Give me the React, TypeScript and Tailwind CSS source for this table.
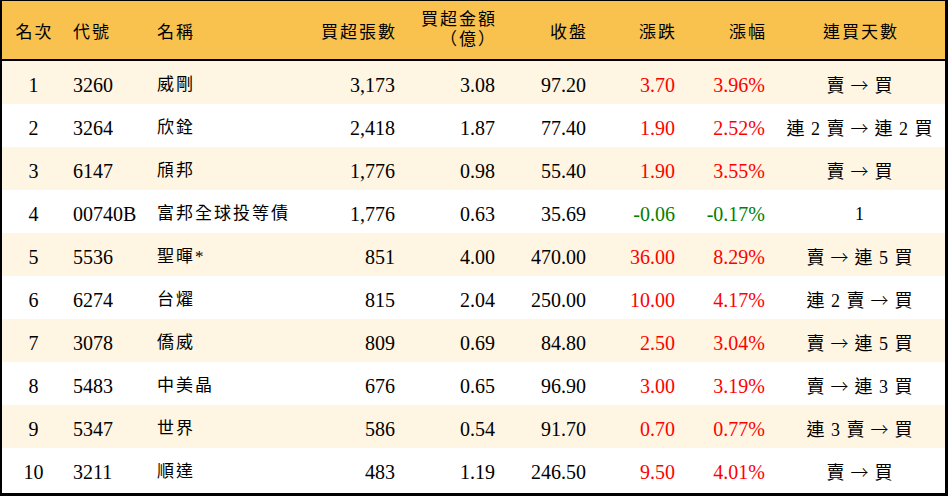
import React from "react";

// --- Data ---
type Row = {
  rank: number;
  code: string;
  name: string;
  lots: string;
  amount: string;
  close: string;
  change: string;
  pct: string;
  streak: string;
};

const rows: Row[] = [
  { rank: 1, code: "3260", name: "威剛", lots: "3,173", amount: "3.08", close: "97.20", change: "3.70", pct: "3.96%", streak: "賣 → 買" },
  { rank: 2, code: "3264", name: "欣銓", lots: "2,418", amount: "1.87", close: "77.40", change: "1.90", pct: "2.52%", streak: "連 2 賣 → 連 2 買" },
  { rank: 3, code: "6147", name: "頎邦", lots: "1,776", amount: "0.98", close: "55.40", change: "1.90", pct: "3.55%", streak: "賣 → 買" },
  { rank: 4, code: "00740B", name: "富邦全球投等債", lots: "1,776", amount: "0.63", close: "35.69", change: "-0.06", pct: "-0.17%", streak: "1" },
  { rank: 5, code: "5536", name: "聖暉*", lots: "851", amount: "4.00", close: "470.00", change: "36.00", pct: "8.29%", streak: "賣 → 連 5 買" },
  { rank: 6, code: "6274", name: "台燿", lots: "815", amount: "2.04", close: "250.00", change: "10.00", pct: "4.17%", streak: "連 2 賣 → 買" },
  { rank: 7, code: "3078", name: "僑威", lots: "809", amount: "0.69", close: "84.80", change: "2.50", pct: "3.04%", streak: "賣 → 連 5 買" },
  { rank: 8, code: "5483", name: "中美晶", lots: "676", amount: "0.65", close: "96.90", change: "3.00", pct: "3.19%", streak: "賣 → 連 3 買" },
  { rank: 9, code: "5347", name: "世界", lots: "586", amount: "0.54", close: "91.70", change: "0.70", pct: "0.77%", streak: "連 3 賣 → 買" },
  { rank: 10, code: "3211", name: "順達", lots: "483", amount: "1.19", close: "246.50", change: "9.50", pct: "4.01%", streak: "賣 → 買" },
];

const cols = "grid grid-cols-[63px_80px_155px_105px_100px_91px_89px_90px_1fr]";
const font = { fontFamily: '"Liberation Serif", "Noto Sans CJK TC", serif' };

// streak text: "賣 → 買" — the arrow gets the CJK font so it is full width
const Streak: React.FC<{ text: string }> = ({ text }) => {
  const parts = text.split(" → ");
  if (parts.length < 2) return <>{text}</>;
  return (
    <>
      <span className="whitespace-pre">{parts[0]}</span>
      <span className="mx-[5px] font-['Noto_Sans_CJK_TC'] font-light">→</span>
      <span className="whitespace-pre">{parts[1]}</span>
    </>
  );
};

// --- Header ---
const Header: React.FC = () => (
  <div className={`${cols} h-[60px] items-center bg-[#f9c24f] border-b-2 border-black text-[17px] tracking-[2px] text-black pt-[5px]`}>
    <div className="text-center pl-[2px]">名次</div>
    <div className="pl-[8px]">代號</div>
    <div className="pl-[12px]">名稱</div>
    <div className="text-right pr-[8px]">買超張數</div>
    <div className="text-right pr-[8px] leading-[20px] -mt-[6px]">
      買超金額
      <br />
      （億）
    </div>
    <div className="text-right pr-[8px]">收盤</div>
    <div className="text-right pr-[8px]">漲跌</div>
    <div className="text-right pr-[8px]">漲幅</div>
    <div className="text-center pl-[2px]">連買天數</div>
  </div>
);

// --- Body row ---
const TableRow: React.FC<{ row: Row; shaded: boolean }> = ({ row, shaded }) => {
  const tone = row.change.startsWith("-") ? "text-[#008000]" : "text-[#ff0000]";
  return (
    <div className={`${cols} h-[43px] items-center pt-[5px] text-[20px] text-black ${shaded ? "bg-[#fef5e2]" : "bg-white"}`}>
      <div className="text-center">{row.rank}</div>
      <div className="pl-[8px]">{row.code}</div>
      <div className="pl-[12px] text-[17px] tracking-[2px]">{row.name}</div>
      <div className="text-right pr-[10px]">{row.lots}</div>
      <div className="text-right pr-[10px]">{row.amount}</div>
      <div className="text-right pr-[10px]">{row.close}</div>
      <div className={`text-right pr-[10px] ${tone}`}>{row.change}</div>
      <div className={`text-right pr-[10px] ${tone}`}>{row.pct}</div>
      <div className="text-center text-[18px] tracking-[1px]">
        <Streak text={row.streak} />
      </div>
    </div>
  );
};

// --- Main App ---
const App: React.FC = () => (
  <div
    className="w-[948px] h-[496px] bg-white border-black border-t border-l-2 border-r-[3px] border-b-[3px] overflow-hidden"
    style={font}
  >
    <Header />
    {rows.map((row, i) => (
      <TableRow key={row.rank} row={row} shaded={i % 2 === 0} />
    ))}
  </div>
);

export default App;
